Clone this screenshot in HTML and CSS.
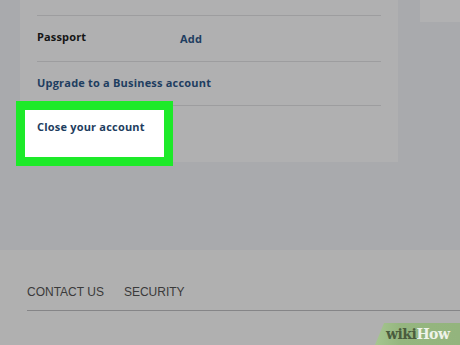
FILE: index.html
```html
<!DOCTYPE html>
<html>
<head>
<meta charset="utf-8">
<link rel="stylesheet" href="styles.css">
</head>
<body>
<div class="page">
  <div class="top">
    <div class="card">
      <div class="row row-first">
        <span class="label">Passport</span>
        <a class="link add">Add</a>
      </div>
      <div class="row">
        <a class="link">Upgrade to a Business account</a>
      </div>
      <div class="row row-last">
        <a class="link close">Close your account</a>
      </div>
    </div>
    <div class="side"><div class="side-box"></div></div>
  </div>
  <footer class="footer">
    <nav class="foot-nav">
      <span>CONTACT US</span>
      <span>SECURITY</span>
    </nav>
    <div class="foot-line"></div>
    <div class="wiki"><span class="wiki-w">wiki</span><span class="wiki-h">How</span></div>
  </footer>
</div>
</body>
</html>
```
FILE: styles.css
```css
*, *::before, *::after { box-sizing: border-box; }
html, body { margin: 0; padding: 0; }
body {
  width: 460px;
  height: 345px;
  overflow: hidden;
  background: #a9aaad;
  font-family: "Open Sans", "Liberation Sans", sans-serif;
}
.page { display: flex; flex-direction: column; height: 345px; }
.top { display: flex; height: 250px; }
.card {
  margin-left: 20px;
  width: 378px;
  height: 162px;
  background: #b0b0b1;
  padding: 0 17px;
  display: flex;
  flex-direction: column;
}
.row {
  border-top: 1px solid #9d9d9f;
  display: flex;
  align-items: center;
}
.row-first { margin-top: 15px; height: 46px; padding-bottom: 4px; }
.row + .row { height: 44px; }
.row-last { position: relative; }
.label { font-weight: 700; font-size: 11px; color: #151515; width: 143px; letter-spacing: 0.15px; }
.link { font-weight: 700; font-size: 11px; color: #1e3d60; text-decoration: none; letter-spacing: 0.2px; }
.add { margin-top: 3px; }
.row:nth-child(2) .link { margin-top: -3px; }
.close { position: relative; z-index: 1; }
.row-last::before {
  content: "";
  position: absolute;
  left: -21px;
  top: -5px;
  width: 157px;
  height: 65px;
  background: #fff;
  border: 9px solid #1dea29;
  z-index: 0;
}
.row-last .close { margin-top: -2px; }
.side { flex: 1; }
.side-box {
  margin-left: 22px;
  height: 22px;
  background: #b1b1b2;
}
.footer {
  flex: 1;
  background: #b0b0b0;
  position: relative;
  padding: 35px 0 0 27px;
}
.foot-nav {
  display: flex;
  gap: 20px;
  font-family: "Liberation Sans", Arial, sans-serif;
  font-size: 12px;
  color: #3a3a3a;
}
.foot-line {
  margin-top: 11px;
  height: 1px;
  background: #858587;
}
.wiki {
  position: absolute;
  right: 0;
  bottom: 0;
  width: 85px;
  height: 22px;
  background: linear-gradient(90deg, #a6c690 0%, #95b67f 30%, #93b47d 100%);
  clip-path: polygon(9px 0, 100% 0, 100% 100%, 0 100%);
  font-family: "DejaVu Serif", "Liberation Serif", serif;
  font-weight: 700;
  font-size: 14px;
  line-height: 18px;
  padding: 2px 0 0 11px;
  letter-spacing: -0.5px;
  white-space: nowrap;
}
.wiki-w { color: #4a5c3d; }
.wiki-h { color: #eef3ea; }
```
